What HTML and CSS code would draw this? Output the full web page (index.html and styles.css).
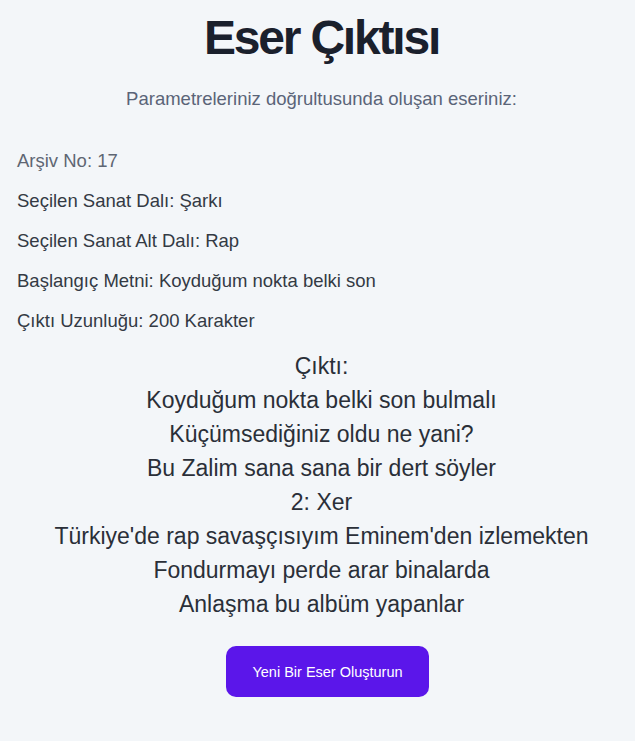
FILE: index.html
```html
<!DOCTYPE html>
<html lang="tr">
<head>
<meta charset="utf-8">
<title>Eser Çıktısı</title>
<link rel="stylesheet" href="styles.css">
</head>
<body>
<main class="page">
  <h1 class="title">Eser Çıktısı</h1>
  <p class="subtitle">Parametreleriniz doğrultusunda oluşan eseriniz:</p>
  <div class="details">
    <p class="detail detail-muted">Arşiv No: 17</p>
    <p class="detail">Seçilen Sanat Dalı: Şarkı</p>
    <p class="detail">Seçilen Sanat Alt Dalı: Rap</p>
    <p class="detail">Başlangıç Metni: Koyduğum nokta belki son</p>
    <p class="detail">Çıktı Uzunluğu: 200 Karakter</p>
  </div>
  <div class="output">
    <p class="line">Çıktı:</p>
    <p class="line">Koyduğum nokta belki son bulmalı</p>
    <p class="line">Küçümsediğiniz oldu ne yani?</p>
    <p class="line">Bu Zalim sana sana bir dert söyler</p>
    <p class="line">2: Xer</p>
    <p class="line">Türkiye'de rap savaşçısıyım Eminem'den izlemekten</p>
    <p class="line">Fondurmayı perde arar binalarda</p>
    <p class="line">Anlaşma bu albüm yapanlar</p>
  </div>
  <div class="actions">
    <button class="btn" type="button">Yeni Bir Eser Oluşturun</button>
  </div>
</main>
</body>
</html>
```

FILE: styles.css
```css
html, body {
  margin: 0;
  padding: 0;
  background: #f3f6f9;
}
body {
  font-family: "Liberation Sans", Arial, sans-serif;
  color: #2d3748;
}
.page {
  padding: 10px 9px 40px 17px;
}
.title {
  margin: 0;
  text-align: center;
  font-size: 48px;
  line-height: 56px;
  font-weight: 700;
  letter-spacing: -2.2px;
  color: #1a202c;
}
.subtitle {
  margin: 21px 0 0;
  text-align: center;
  font-size: 18.5px;
  line-height: 24px;
  color: #5a6478;
}
.details {
  margin-top: 38px;
  display: flex;
  flex-direction: column;
  gap: 16px;
}
.detail {
  margin: 0;
  font-size: 18.5px;
  line-height: 24px;
  color: #333a44;
}
.detail-muted {
  color: #5e6673;
}
.output {
  margin-top: 16px;
  display: flex;
  flex-direction: column;
  align-items: center;
}
.line {
  margin: 0;
  font-size: 23px;
  line-height: 34px;
  color: #2a2f38;
  text-align: center;
}
.actions {
  display: flex;
  justify-content: center;
  margin-top: 25px;
}
.btn {
  margin-left: 12px;
  width: 203px;
  height: 51px;
  border: none;
  border-radius: 10px;
  background: #5b16ea;
  color: #ffffff;
  font-family: "Liberation Sans", Arial, sans-serif;
  font-size: 14.5px;
  cursor: pointer;
}
```
